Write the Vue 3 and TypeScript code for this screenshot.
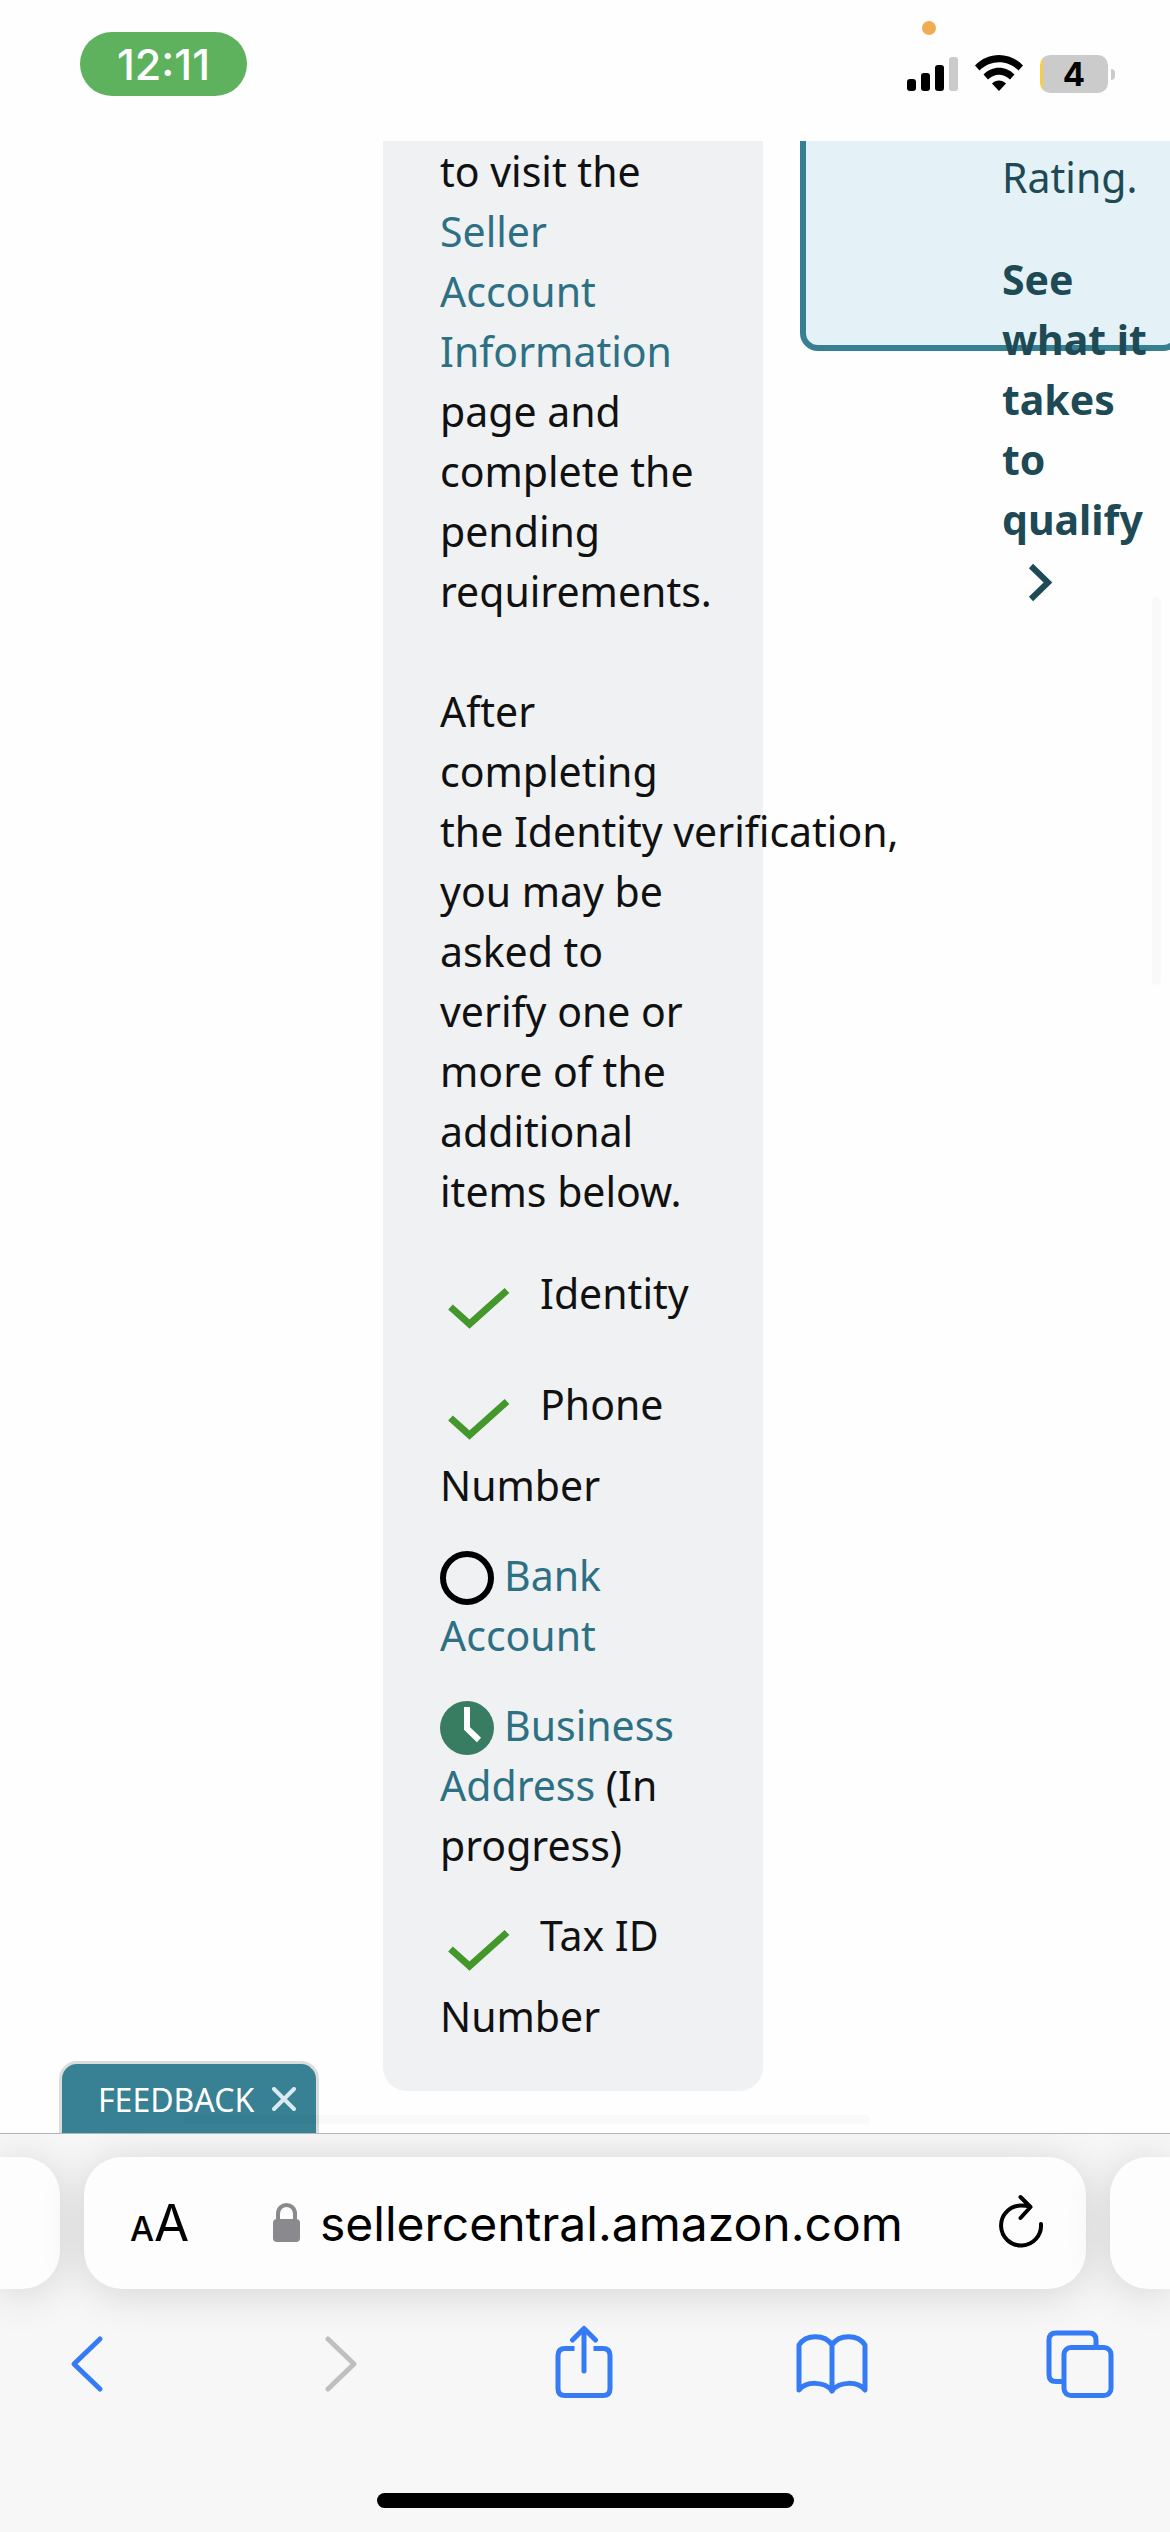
<script setup lang="ts">
type Status = 'done' | 'open' | 'pending'

interface Requirement {
  id: string
  status: Status
  label: string[]
  note?: string[]
}

const requirements: Requirement[] = [
  { id: 'identity', status: 'done', label: ['Identity'] },
  { id: 'phone', status: 'done', label: ['Phone', 'Number'] },
  { id: 'bank', status: 'open', label: ['Bank', 'Account'] },
  { id: 'address', status: 'pending', label: ['Business', 'Address'], note: ['(In', 'progress)'] },
  { id: 'tax', status: 'done', label: ['Tax ID', 'Number'] },
]
</script>

<template>
  <div class="screen">
    <header class="status-bar">
      <span class="clock">12:11</span>
      <span class="mic-dot"></span>
      <div class="indicators">
        <svg class="signal" width="51" height="34" viewBox="0 0 51 34">
          <rect x="0" y="22" width="9" height="12" rx="3" />
          <rect x="14" y="16" width="9" height="18" rx="3" />
          <rect x="28" y="8" width="9" height="26" rx="3" />
          <rect x="42" y="0" width="9" height="34" rx="3" fill="#cbcbcb" />
        </svg>
        <svg class="wifi" width="48" height="36" viewBox="0 0 48 36">
          <path d="M0 10.500C13-3.500 35-3.500 48 10.500L43.500 15.500C32.500 4.500 15.500 4.500 4.500 15.500Z" />
          <path d="M8.500 19.500C17 10.500 31 10.500 39.500 19.500L35 24.500C28.500 18 19.500 18 13 24.500Z" />
          <path d="M17 28.500C21 24.500 27 24.500 31 28.500L24 36Z" />
        </svg>
        <div class="battery">4</div>
      </div>
    </header>

    <main class="page">
      <section class="panel">
        <p class="copy">
          to visit the<br />
          <a href="#account">Seller<br />Account<br />Information</a><br />
          page and<br />complete the<br />pending<br />requirements.<br />
          <br />
          After<br />completing<br />the&nbsp;Identity&nbsp;verification,<br />you may be<br />
          asked to<br />verify one or<br />more of the<br />additional<br />items below.
        </p>
        <ul class="requirements">
          <li v-for="item in requirements" :key="item.id">
            <div class="first-line">
              <svg v-if="item.status === 'done'" class="check" width="100" height="81" viewBox="0 0 100 81">
                <path d="M10.500 44L29.500 61L67 27.500" fill="none" stroke="#44972b" stroke-width="7" />
              </svg>
              <svg v-else-if="item.status === 'open'" class="round" width="54" height="54" viewBox="0 0 54 54">
                <circle cx="27" cy="27" r="24" fill="none" stroke="#000" stroke-width="6" />
              </svg>
              <svg v-else class="round" width="54" height="54" viewBox="0 0 54 54">
                <circle cx="27" cy="27" r="27" fill="#387c62" />
                <path d="M27 6V27.500L39 39" fill="none" stroke="#fff" stroke-width="6" />
              </svg>
              <span v-if="item.status === 'done'">{{ item.label[0] }}</span>
              <a v-else :href="'#' + item.id">{{ item.label[0] }}</a>
            </div>
            <div v-if="item.label[1]">
              <span v-if="item.status === 'done'">{{ item.label[1] }}</span>
              <a v-else :href="'#' + item.id">{{ item.label[1] }}</a>
              <template v-if="item.note">{{ ' ' + item.note[0] }}<br />{{ item.note[1] }}</template>
            </div>
          </li>
        </ul>
      </section>

      <aside class="promo-column">
        <div class="promo">
          <p>Rating.</p>
          <a class="promo-link" href="#qualify">
            See<br />what it<br />takes<br />to<br />qualify
            <svg width="60" height="60" viewBox="0 0 60 60">
              <path d="M29 17L46 33.500L29 50" fill="none" stroke="currentColor" stroke-width="6" />
            </svg>
          </a>
        </div>
      </aside>

      <div class="feedback">
        <a href="#feedback">FEEDBACK</a>
        <button type="button" aria-label="Close feedback">
          <svg width="24" height="24" viewBox="0 0 24 24">
            <path d="M2 2L22 22M22 2L2 22" stroke="#d9ebf0" stroke-width="4" stroke-linecap="round" />
          </svg>
        </button>
      </div>
      <div class="scroll-y"></div>
      <div class="scroll-x"></div>
    </main>

    <footer class="browser">
      <div class="tabs">
        <div class="tab-edge left"></div>
        <div class="address">
          <button class="text-size" type="button" aria-label="Page settings">
            <span class="small-a">A</span><span class="large-a">A</span>
          </button>
          <svg class="lock" width="27" height="39" viewBox="0 0 27 39">
            <rect x="0" y="16" width="27" height="23" rx="4" fill="#8a898e" />
            <path d="M5 18V11C5-1 22-1 22 11V18" fill="none" stroke="#8a898e" stroke-width="4" />
          </svg>
          <input type="text" value="sellercentral.amazon.com" aria-label="Address" />
          <button class="reload" type="button" aria-label="Reload">
            <svg width="46" height="56" viewBox="0 0 46 56">
              <path
                d="M43 31A20 20 0 1 1 23 12.500Q28 12.500 32 13.500M22.500 4L32.500 14L22.500 25"
                fill="none" stroke="#000" stroke-width="4" stroke-linecap="round" stroke-linejoin="round"
              />
            </svg>
          </button>
        </div>
        <div class="tab-edge right"></div>
      </div>

      <nav class="toolbar">
        <button type="button" aria-label="Back">
          <svg width="44" height="76" viewBox="0 0 44 76">
            <path d="M35 14L9 39L35 64" />
          </svg>
        </button>
        <button type="button" aria-label="Forward" disabled>
          <svg width="44" height="76" viewBox="0 0 44 76">
            <path d="M15 14L41 39L15 64" />
          </svg>
        </button>
        <button type="button" aria-label="Share">
          <svg width="58" height="76" viewBox="0 0 58 76">
            <path stroke-linecap="butt" d="M19.500 23.500H10Q3 23.500 3 30.500V63.500Q3 70.500 10 70.500H48Q55 70.500 55 63.500V30.500Q55 23.500 48 23.500H38.500" />
            <path d="M29 46V3.500M17.500 15L29 3.500L40.500 15" />
          </svg>
        </button>
        <button type="button" aria-label="Bookmarks">
          <svg width="72" height="76" viewBox="0 0 72 76">
            <path d="M36 20C29 9 10 9 3 20V65C10 56 29 56 36 66C43 56 62 56 69 65V20C62 9 43 9 36 20V66" />
          </svg>
        </button>
        <button type="button" aria-label="Tabs">
          <svg width="68" height="76" viewBox="0 0 68 76">
            <path stroke-linecap="butt" d="M16 56.500H10Q3 56.500 3 49.500V15Q3 8 10 8H43Q50 8 50 15V22" />
            <rect x="18" y="22.500" width="47" height="48" rx="7" />
          </svg>
        </button>
      </nav>
      <div class="home-indicator"></div>
    </footer>
  </div>
</template>

<style>
body {
  margin: 0;
  background: #fefefe;
}
</style>

<style scoped>
.screen {
  display: flex;
  flex-direction: column;
  min-height: 100vh;
  overflow: hidden;
  background: #fefefe;
  color: #111;
  font-family: "Noto Sans", sans-serif;
  font-size: 41px;
  line-height: 60px;
}

a {
  color: #2d7084;
  text-decoration: none;
}

p,
ul {
  margin: 0;
  padding: 0;
}

button {
  padding: 0;
  border: 0;
  background: none;
  color: inherit;
}

svg {
  display: block;
  flex: none;
}

.status-bar {
  position: relative;
  display: flex;
  align-items: flex-start;
  justify-content: space-between;
  box-sizing: border-box;
  height: 141px;
  padding: 32px 55px 0 80px;
  font-family: Inter, sans-serif;
}

.clock {
  width: 167px;
  border-radius: 32px;
  background: #5eb25e;
  color: #fff;
  font-size: 43px;
  font-weight: 500;
  line-height: 64px;
  text-align: center;
}

.mic-dot {
  position: absolute;
  top: 21px;
  right: 234px;
  width: 14px;
  height: 14px;
  border-radius: 7px;
  background: #f0ac50;
}

.indicators {
  display: flex;
  align-items: flex-end;
  padding-top: 23px;
}

.signal,
.wifi {
  margin: 0 17px 2px 0;
}

.battery {
  position: relative;
  width: 68px;
  margin-right: 7px;
  border-radius: 10px;
  background: linear-gradient(90deg, #f5cd46 3px, #cbcbcb 3px);
  color: #000;
  font-size: 33px;
  font-weight: 700;
  line-height: 38px;
  text-align: center;
}

.battery::after {
  content: "";
  position: absolute;
  top: 14px;
  right: -7px;
  width: 4px;
  height: 11px;
  border-radius: 0 4px 4px 0;
  background: #cbcbcb;
}

.page {
  position: relative;
  flex: 1;
  display: grid;
  grid-template-columns: minmax(0, 380fr) minmax(0, 407fr);
  align-items: start;
  padding: 0 0 42px 383px;
  overflow: hidden;
}

.panel {
  padding: 0 0 45px 57px;
  border-radius: 0 0 24px 24px;
  background: #eff1f3;
  white-space: nowrap;
}

.copy {
  position: relative;
  z-index: 1;
}

.requirements {
  display: flex;
  flex-direction: column;
  gap: 30px;
  margin-top: 42px;
  list-style: none;
}

.first-line {
  display: flex;
  align-items: flex-start;
}

.round {
  margin: 6px 10px 0 0;
}

.promo-column {
  padding-left: 37px;
  margin-right: -11px;
}

.promo {
  box-sizing: border-box;
  height: 210px;
  padding: 6px 0 0 196px;
  border: 6px solid #378094;
  border-top: 0;
  border-radius: 0 0 18px 18px;
  background: #e4f1f6;
  color: #1d4a54;
  white-space: nowrap;
}

.promo-link {
  display: block;
  margin-top: 42px;
  color: #1d4a54;
  font-weight: 700;
}

.feedback {
  position: absolute;
  bottom: 0;
  left: 59px;
  display: flex;
  align-items: flex-start;
  gap: 18px;
  box-sizing: border-box;
  width: 260px;
  height: 72px;
  padding: 6px 0 0 36px;
  border: 3px solid #dcdcdc;
  border-bottom: 0;
  border-radius: 18px 18px 0 0;
  background: #388093;
  font-size: 32px;
}

.feedback a {
  color: #fff;
}

.feedback button {
  padding-top: 17px;
}

.scroll-y,
.scroll-x {
  position: absolute;
  border-radius: 5px;
  background: rgba(0, 0, 0, 0.02);
}

.scroll-y {
  top: 456px;
  right: 9px;
  width: 9px;
  height: 388px;
}

.scroll-x {
  left: 183px;
  bottom: 9px;
  width: 687px;
  height: 9px;
}

.browser {
  overflow: hidden;
  border-top: 1px solid #b5b5b7;
  background: #f7f7f7;
}

.tabs {
  display: flex;
  gap: 24px;
  padding-top: 23px;
}

.tab-edge,
.address {
  height: 132px;
  background: #fdfdfd;
  box-shadow: 0 4px 44px rgba(0, 0, 0, 0.15);
}

.tab-edge {
  flex: none;
  width: 60px;
}

.left {
  border-radius: 0 38px 38px 0;
}

.right {
  border-radius: 38px 0 0 38px;
}

.address {
  display: flex;
  flex: 1;
  align-items: flex-start;
  box-sizing: border-box;
  min-width: 0;
  padding: 36px 42px 0 46px;
  border-radius: 38px;
  color: #000;
  font-family: Inter, sans-serif;
}

.text-size {
  flex: none;
  width: 143px;
  font-family: Inter, sans-serif;
  line-height: 60px;
  text-align: left;
}

.small-a {
  font-size: 34px;
  font-weight: 500;
}

.large-a {
  font-size: 51px;
}

.lock {
  margin-top: 10px;
}

.address input {
  flex: 1;
  min-width: 0;
  height: 60px;
  margin: 0 0 0 20px;
  padding: 0;
  border: 0;
  outline: 0;
  background: none;
  color: #000;
  font-family: Inter, sans-serif;
  font-size: 48px;
}

.toolbar {
  display: flex;
  justify-content: space-between;
  padding: 36px 54px 0 51px;
}

.toolbar button {
  display: flex;
  justify-content: center;
  width: 72px;
}

.toolbar svg {
  fill: none;
  stroke: #357bf6;
  stroke-width: 5px;
  stroke-linecap: round;
  stroke-linejoin: round;
}

.toolbar button:disabled svg {
  stroke: #bfbfbf;
}

.home-indicator {
  width: 417px;
  height: 15px;
  margin: 92px auto 24px;
  border-radius: 8px;
  background: #000;
}
</style>
